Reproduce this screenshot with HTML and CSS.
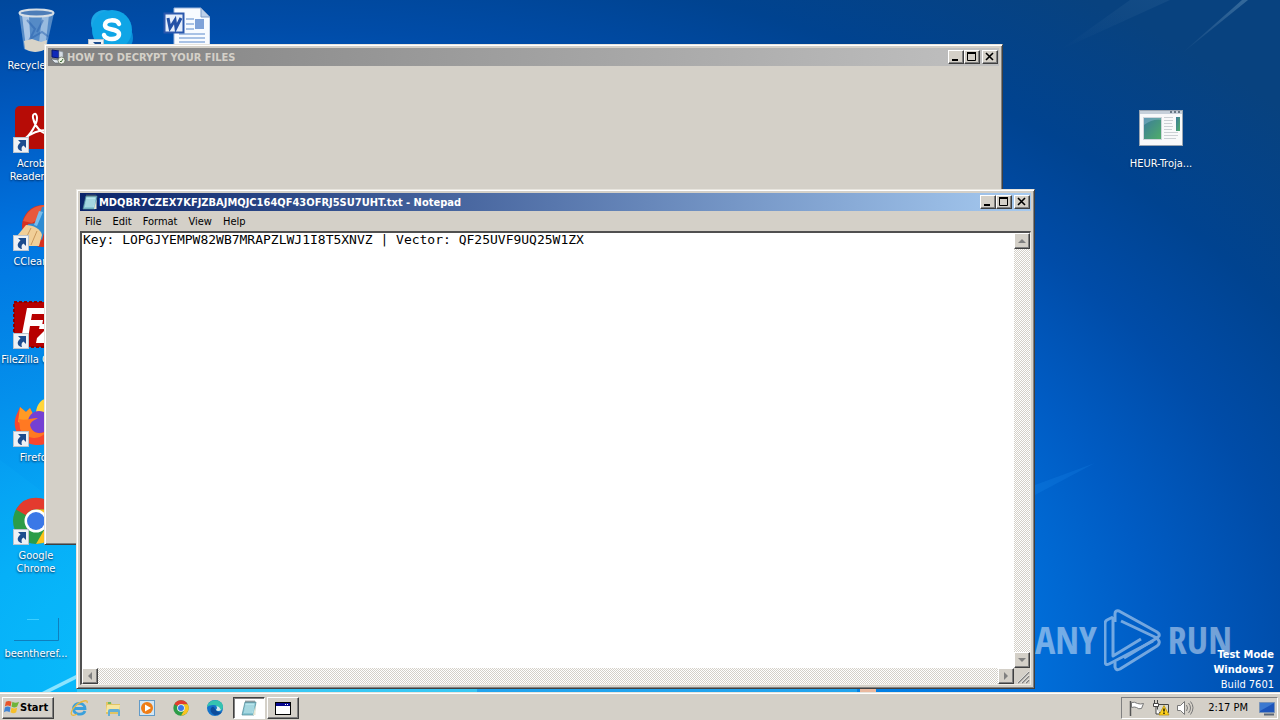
FILE: index.html
```html
<!DOCTYPE html>
<html lang="en">
<head>
    <meta charset="UTF-8">
    <meta name="viewport" content="width=device-width, initial-scale=1.0">
    <title>Desktop</title>
    <link rel="stylesheet" href="styles.css">
</head>
<body>
    <svg class="defs" width="0" height="0" aria-hidden="true">
        <defs>
            <symbol id="shortcut" viewBox="0 0 16 16">
                <rect x="0.5" y="0.5" width="15" height="15" fill="#eef1f5" stroke="#b9c3ce"/>
                <path d="M5 3h8v8l-2.500-2.500C8.500 9.500 8 11.500 9 14 5 13.500 2.500 9.500 7.500 5.500Z" fill="#1c4c8e"/>
            </symbol>
            <symbol id="notepad" viewBox="0 0 16 16">
                <path d="M4 2h11l-2 13H1Z" fill="#86c5d3" stroke="#4f8694" stroke-width="0.700"/>
                <path d="M4.500 3.500h9l-1.500 9.500H3Z" fill="#b9e5ec"/>
                <path d="M4 6h9M4 8h8.500M3.500 10h8.500M3.500 12h8" stroke="#76b7c6" stroke-width="0.600"/>
                <path d="M5 .5v2M7 .5v2M9 .5v2M11 .5v2M13 .5v2" stroke="#59666b"/>
                <path d="M14.500 5v10H12Z" fill="#e6e6d2"/>
            </symbol>
            <symbol id="chrome" viewBox="0 0 48 48">
                <circle cx="24" cy="24" r="23" fill="#2c9c48"/>
                <path d="M4 12.500A23 23 0 0 1 44 12.500H24A11.500 11.500 0 0 0 14 18.300Z" fill="#e33b2e"/>
                <path d="M44 12.500A23 23 0 0 1 24 47L34 29.700A11.500 11.500 0 0 0 34 18.300L24 12.500Z" fill="#fcc31e"/>
                <circle cx="24" cy="24" r="11.500" fill="#fff"/>
                <circle cx="24" cy="24" r="9" fill="#3b78e7"/>
            </symbol>
        </defs>
    </svg>

    <main class="desktop">
        <svg class="wallpaper" viewBox="0 0 1280 692" preserveAspectRatio="none" aria-hidden="true">
            <defs>
                <linearGradient id="ray" x1="0" y1="1" x2="1" y2="0">
                    <stop offset="0" stop-color="#fff" stop-opacity="0"/>
                    <stop offset="1" stop-color="#b8e0f0" stop-opacity="0.250"/>
                </linearGradient>
            </defs>
            <path d="M1180 55 1242 0h6Z" fill="url(#ray)"/>
            <path d="M1060 50 1130 0h40Z" fill="url(#ray)" opacity="0.250"/>
            <path d="M1035 485l60-22-60 32Z" fill="#2aa0ff" opacity="0.150"/>
            <path d="M42 692 78 674v4l-28 14Z" fill="#a5ecff" opacity="0.900"/>
            <path d="M0 460 80 520v172H0Z" fill="#18d0ff" opacity="0.080"/>
            <path d="M77 689h400v3H77Z" fill="#39c8f4"/>
            <path d="M477 689h380v3H477Z" fill="#22a4ee"/>
            <path d="M860 689h16v3h-16Z" fill="#e9b9a0"/>
        </svg>

        <div class="icon-grid">
            <a class="shortcut r1 c1" href="#">
                <svg class="shortcut-icon" viewBox="0 0 48 48">
                    <path d="M7 6 12 42q11 6 22 0L42 6Z" fill="#8eb6de" fill-opacity="0.600"/>
                    <path d="M10 8l4 33 5 2-2-33Z" fill="#e2effa" opacity="0.600"/>
                    <path d="M37 8l-4 34-7 2 4-34Z" fill="#dcecf8" opacity="0.500"/>
                    <path d="M15 13l8 9-5 10 12-7 7 5M31 13l-6 12" fill="none" stroke="#2a62ae" stroke-width="2" opacity="0.500"/>
                    <path d="M12 34l8-2 9 3 6-2-1 9q-11 6-21 0Z" fill="#d8d4c8"/>
                    <ellipse cx="24.500" cy="6" rx="17" ry="3.500" fill="#4d7db8" stroke="#d7dfe6" stroke-width="2"/>
                </svg>
                <span>Recycle Bin</span>
            </a>
            <a class="shortcut r2 c1" href="#">
                <svg class="shortcut-icon" viewBox="0 0 48 48">
                    <rect x="3" y="1" width="44" height="43" rx="5" fill="#b60c06"/>
                    <path d="M12 34c6-3 13-15 13-21 0-6-5-5-4 0 2 9 8 15 15 16 6 1 5-4-1-4-9 0-17 4-23 9Z" fill="none" stroke="#fff" stroke-width="2"/>
                    <use href="#shortcut" x="1" y="32" width="16" height="16"/>
                </svg>
                <span>Acrobat Reader DC</span>
            </a>
            <a class="shortcut r3 c1" href="#">
                <svg class="shortcut-icon" viewBox="0 0 48 48">
                    <circle cx="31" cy="23" r="21" fill="#d8301f"/>
                    <path d="M11 18Q17 3 32 2l10 4-22 14Z" fill="#e8583a"/>
                    <path d="M30 4 25 20l-9 1-2 7 16 9 9-33Z" fill="#2f8bd2"/>
                    <path d="M27 8 22 22l3 1 6-14Z" fill="#79bdea"/>
                    <path d="M14 22c7 0 15 4 16 10l-3 11H5V33Z" fill="#f1cf98"/>
                    <path d="M19 25l-6 12M25 28l-6 14" stroke="#c9985c"/>
                    <use href="#shortcut" x="1" y="32" width="16" height="16"/>
                </svg>
                <span>CCleaner</span>
            </a>
            <a class="shortcut r4 c1" href="#">
                <svg class="shortcut-icon" viewBox="0 0 48 48">
                    <rect x="2" y="1" width="45" height="45" fill="#b70000" stroke="#8c0000" stroke-width="2" stroke-dasharray="3 2"/>
                    <path d="M15 7h19l-1 6H20l-1 6h12l-1 6H18l-2 13H9Z" fill="#fff"/>
                    <path d="M28 23h16L33 36h10l-1 6H24l1-5 9-9h-7Z" fill="#fff"/>
                    <use href="#shortcut" x="1" y="32" width="16" height="16"/>
                </svg>
                <span>FileZilla Client</span>
            </a>
            <a class="shortcut r5 c1" href="#">
                <svg class="shortcut-icon" viewBox="0 0 48 48">
                    <path d="M24 13C25 5 29 1 33 0c2 8 13 12 13 25Z" fill="#ffd53b"/>
                    <path d="M8 8l6 5 4-4 3 6c4-3 14-2 19 3 8 12 3 28-14 28S-1 30 4 17Z" fill="#f7472e"/>
                    <path d="M8 8l6 5 4-4 3 6 6 2-9 5q-6 4-12 1Z" fill="#ff9a24"/>
                    <circle cx="27" cy="23" r="11" fill="#7540d3"/>
                    <path d="M7 20c6 2 13-1 19-1-3 2-7 3-8 7 2 9 11 10 17 6-7 10-21 9-27-2Z" fill="#ff7922"/>
                    <use href="#shortcut" x="1" y="32" width="16" height="16"/>
                </svg>
                <span>Firefox</span>
            </a>
            <a class="shortcut r6 c1" href="#">
                <svg class="shortcut-icon" viewBox="0 0 48 48">
                    <use href="#chrome" width="48" height="48"/>
                    <use href="#shortcut" x="1" y="32" width="16" height="16"/>
                </svg>
                <span>Google Chrome</span>
            </a>
            <a class="shortcut r7 c1" href="#">
                <svg class="shortcut-icon" viewBox="0 0 48 48">
                    <path d="M2 45.500h44.500V23" fill="none" stroke="#0f7fbe"/>
                    <path d="M15 24.500h12" stroke="#3ccfff"/>
                </svg>
                <span>beentheref...</span>
            </a>
            <a class="shortcut r1 c2" href="#" aria-label="Skype">
                <svg class="shortcut-icon" viewBox="0 0 48 48">
                    <circle cx="17" cy="16" r="13" fill="#1ba6e6"/>
                    <circle cx="32" cy="31" r="14" fill="#0a8fd8"/>
                    <circle cx="25" cy="23" r="20" fill="#0fa5e6"/>
                    <path d="M32 17c-2-5-14-5-14 1 0 6 14 3 14 9 0 7-14 6-15 1" fill="none" stroke="#fff" stroke-width="4.500" stroke-linecap="round"/>
                    <use href="#shortcut" x="1" y="32" width="16" height="16"/>
                </svg>
            </a>
            <a class="shortcut r1 c3" href="#" aria-label="Document">
                <svg class="shortcut-icon" viewBox="0 0 48 48">
                    <path d="M12 1h27l9 9v38H12Z" fill="#f8fbff" stroke="#9cb6dc"/>
                    <path d="M39 1v9h9Z" fill="#bdd0e9" stroke="#7e9ac5"/>
                    <path d="M24 12h8M24 17h8M24 22h8M17 27h26M17 31h26M17 35h26" stroke="#8fb0dd" stroke-width="1.500"/>
                    <rect x="33" y="12" width="9" height="10" fill="#7fa2d8"/>
                    <rect x="2.500" y="6.500" width="19" height="19" fill="#e6eefb" stroke="#2b58ad" stroke-width="2"/>
                    <path d="M6 11l2 10 5-8 1 8 5-10" fill="none" stroke="#2451a6" stroke-width="3"/>
                </svg>
            </a>
            <a class="shortcut r2 c16" href="#">
                <svg class="shortcut-icon" viewBox="0 0 48 48">
                    <defs>
                        <linearGradient id="pane" x1="0" y1="0" x2="1" y2="1">
                            <stop offset="0" stop-color="#3b7a9c"/>
                            <stop offset="1" stop-color="#4fae68"/>
                        </linearGradient>
                    </defs>
                    <rect x="2.500" y="5.500" width="43" height="35" fill="#f8f9fa" stroke="#9aa5b1"/>
                    <path d="M3 6h42v3H3Z" fill="#c6d0da"/>
                    <path d="M33 7h2M37 7h2M41 7h2" stroke="#4a5968" stroke-width="1.500"/>
                    <rect x="6.500" y="12.500" width="18" height="22" fill="url(#pane)" stroke="#cfd6dc"/>
                    <path d="M7 20q8-6 17-5v-2H7Z" fill="#9cc9dc" opacity="0.400"/>
                    <path d="M27 12.500h9M27 15.500h9M27 18.500h8M27 21.500h9M27 24.500h8M27 27.500h14M27 30.500h14M27 33.500h12" stroke="#cbd0d4"/>
                    <rect x="39" y="12" width="4" height="14" fill="url(#pane)"/>
                </svg>
                <span>HEUR-Troja...</span>
            </a>
        </div>

        <div class="watermark" aria-hidden="true">
            <span class="word">ANY</span>
            <svg viewBox="0 0 57 63">
                <path d="M9 8 3 11q-2 1-2 4v37q0 5 4 3L49 32M9 8v39l28-17"/>
                <path d="M11 13V5q0-4 4-3l38 21q3 2 2 4l-2 2L17 12"/>
                <path d="M11 53v5q1 4 5 2l37-23q3-2 2-5l-2-3-33 20"/>
            </svg>
            <span class="word">RUN</span>
        </div>
        <div class="build-info">
            <strong>Test Mode</strong>
            <strong>Windows 7</strong>
            <span>Build 7601</span>
        </div>

        <section class="window window-back">
            <header class="title-bar inactive">
                <svg class="title-icon" viewBox="0 0 16 16">
                    <path d="M2 1l7 1v7l-7-1Z" fill="#1029b8" stroke="#0a1870"/>
                    <path d="M9 2l4 1v8l-4-2Z" fill="#d6dde4" stroke="#8893a0" stroke-width="0.600"/>
                    <path d="M1 10l8 1 4 3H5Z" fill="#dfe6ec" stroke="#56606c" stroke-width="0.600"/>
                    <circle cx="11.500" cy="11.500" r="3.500" fill="#eef3e8" stroke="#586050" stroke-width="0.700"/>
                    <path d="M10 12l1 1 2-3" fill="none" stroke="#3d6b35"/>
                </svg>
                <h1>HOW TO DECRYPT YOUR FILES</h1>
                <div class="window-buttons">
                    <button aria-label="Minimize"><svg viewBox="0 0 12 10"><path d="M2 8h6" stroke="#000" stroke-width="2"/></svg></button>
                    <button aria-label="Maximize"><svg viewBox="0 0 12 10"><path d="M1.500 1.500h8v7h-8Z" fill="none" stroke="#000"/><path d="M1 1h9" stroke="#000" stroke-width="2"/></svg></button>
                    <button class="close" aria-label="Close"><svg viewBox="0 0 12 10"><path d="M2 1l7 7M9 1 2 8" stroke="#000" stroke-width="1.600"/></svg></button>
                </div>
            </header>
        </section>

        <section class="window window-notepad">
            <header class="title-bar">
                <svg class="title-icon"><use href="#notepad"/></svg>
                <h1>MDQBR7CZEX7KFJZBAJMQJC164QF43OFRJ5SU7UHT.txt - Notepad</h1>
                <div class="window-buttons">
                    <button aria-label="Minimize"><svg viewBox="0 0 12 10"><path d="M2 8h6" stroke="#000" stroke-width="2"/></svg></button>
                    <button aria-label="Maximize"><svg viewBox="0 0 12 10"><path d="M1.500 1.500h8v7h-8Z" fill="none" stroke="#000"/><path d="M1 1h9" stroke="#000" stroke-width="2"/></svg></button>
                    <button class="close" aria-label="Close"><svg viewBox="0 0 12 10"><path d="M2 1l7 7M9 1 2 8" stroke="#000" stroke-width="1.600"/></svg></button>
                </div>
            </header>
            <nav class="menu-bar">
                <button>File</button>
                <button>Edit</button>
                <button>Format</button>
                <button>View</button>
                <button>Help</button>
            </nav>
            <div class="editor">
                <textarea aria-label="Text" wrap="off" spellcheck="false">Key: LOPGJYEMPW82WB7MRAPZLWJ1I8T5XNVZ | Vector: QF25UVF9UQ25W1ZX</textarea>
                <div class="scrollbar vertical">
                    <button aria-label="Scroll up"><svg viewBox="0 0 12 12"><path d="M2 8h8L6 4Z"/></svg></button>
                    <button aria-label="Scroll down"><svg viewBox="0 0 12 12"><path d="M2 4h8L6 8Z"/></svg></button>
                </div>
                <div class="scrollbar">
                    <button aria-label="Scroll left"><svg viewBox="0 0 12 12"><path d="M8 2v8L4 6Z"/></svg></button>
                    <button aria-label="Scroll right"><svg viewBox="0 0 12 12"><path d="M4 2v8l4-4Z"/></svg></button>
                </div>
                <svg class="grip" viewBox="0 0 16 16">
                    <path d="M4 15 15 4M8 15l7-7M12 15l3-3" stroke="#808080" stroke-width="1.500"/>
                    <path d="M3 15 15 3M7 15l8-8M11 15l4-4" stroke="#fff" stroke-width="0.600"/>
                </svg>
            </div>
        </section>
    </main>

    <footer class="taskbar">
        <button class="start">
            <svg viewBox="0 0 18 18">
                <path d="M3 3q3-2 6 0L8 8Q5 6 2 8Z" fill="#e8542a"/>
                <path d="M10 3q3 2 7 0l-2 5q-3 2-6 0Z" fill="#6fb43a"/>
                <path d="M2 9q3-2 6 0l-1 5q-3-2-6 0Z" fill="#3f83d4"/>
                <path d="M9 9q3 2 6 0l-1 5q-3 2-6 0Z" fill="#f6bf2a"/>
            </svg>
            Start
        </button>
        <nav class="tasks">
            <button class="task" aria-label="Internet Explorer">
                <svg viewBox="0 0 18 18">
                    <path d="M15 12c-2 5-11.500 4-11.500-2.500S14.500 2.500 15 9.500H5" fill="none" stroke="#3aa0dc" stroke-width="2.800"/>
                    <path d="M2 16c-3-3 4-12 12-14q4-1 3 2M2 16q2 1 5-1" fill="none" stroke="#e9b83c" stroke-width="1.300"/>
                </svg>
            </button>
            <button class="task" aria-label="Explorer">
                <svg viewBox="0 0 18 18">
                    <path d="M2 3h5l1 2h8v10H2Z" fill="#e2c463"/>
                    <path d="M3 6h13l-1 7H2Z" fill="#f7e6a0"/>
                    <path d="M4 3h3v2H4Z" fill="#75b95e"/>
                    <path d="M4 17v-5q0-2 2-2h8q2 0 2 2v5h-2v-4H6v4Z" fill="#64afd5"/>
                </svg>
            </button>
            <button class="task" aria-label="Media Player">
                <svg viewBox="0 0 18 18">
                    <rect x="1.500" y="1.500" width="15" height="15" fill="#d3e6f4" stroke="#629bc8"/>
                    <circle cx="9" cy="9" r="6" fill="#ef7d16"/>
                    <path d="M7 5.500v7l6-3.500Z" fill="#fff"/>
                </svg>
            </button>
            <button class="task" aria-label="Chrome">
                <svg viewBox="0 0 18 18"><use href="#chrome" x="1" y="1" width="16" height="16"/></svg>
            </button>
            <button class="task" aria-label="Edge">
                <svg viewBox="0 0 18 18">
                    <circle cx="9" cy="9" r="8" fill="#1573ca"/>
                    <path d="M1 9C1-1 17-1 17 8c0 4-5 5-7 3 2-2 1-5-2-5-4 0-7 1-7 3Z" fill="#35c3b0"/>
                    <path d="M10 11c-2-1-1-4-4-3-3 2-1 7 3 8 4 0 6-2 7-3-2 1-5 0-6-2Z" fill="#0d4c9b"/>
                    <path d="M10 11q2-2 .5-4L13 8l2 3q-3 2-5 0Z" fill="#d9e6ee"/>
                </svg>
            </button>
            <button class="task active" aria-label="Notepad">
                <svg viewBox="0 0 18 18"><use href="#notepad" x="1" y="1" width="16" height="16"/></svg>
            </button>
            <button class="task open" aria-label="Window">
                <svg viewBox="0 0 18 18">
                    <rect x="1.500" y="3.500" width="15" height="12" fill="#fff" stroke="#000"/>
                    <path d="M2 5.500h14" stroke="#080890" stroke-width="3"/>
                    <path d="M11 5.500h1M13 5.500h1" stroke="#fff"/>
                </svg>
            </button>
        </nav>
        <div class="tray">
            <svg viewBox="0 0 18 18">
                <path d="M2.500 2v15" stroke="#555" stroke-width="1.500"/>
                <path d="M3.500 3.500q3-1 6 1 3 1 6 0l-2 5q-3 1-5-1-2-1-5 0Z" fill="#fff" stroke="#777"/>
            </svg>
            <svg viewBox="0 0 18 18">
                <path d="M5.500 5.500h11v8h-11Z" fill="#d7d7cf" stroke="#444"/>
                <path d="M2.500 1v3M5.500 1v3M1.500 4.500h5v3h-5ZM4 8v7h4" fill="#fff" stroke="#444"/>
                <path d="M12 6.500 17 16H7Z" fill="#ffd21c" stroke="#b28a00" stroke-width="0.700"/>
                <path d="M12 9.500v3M12 13.500v1.500" stroke="#000" stroke-width="1.300"/>
            </svg>
            <svg viewBox="0 0 18 18">
                <path d="M1.500 6.500h3l4-4v13l-4-4h-3Z" fill="#fff" stroke="#777"/>
                <path d="M10.500 6q2 3 0 6M12.500 4q4 5 0 10M14.500 2.500q5 6 0 13" fill="none" stroke="#777"/>
            </svg>
            <time>2:17 PM</time>
            <svg viewBox="0 0 18 18">
                <path d="M1.500 3.500h15v10h-15Z" fill="#1d55ba" stroke="#7893b8"/>
                <path d="M2 4h14L2 12Z" fill="#3c79d0"/>
                <path d="M6 15.500h10" stroke="#5a6777" stroke-width="2"/>
            </svg>
        </div>
    </footer>
</body>
</html>
```
FILE: styles.css
```css
* {
    box-sizing: border-box;
}
body {
    margin: 0;
    height: 100vh;
    display: flex;
    flex-direction: column;
    overflow: hidden;
    font-family: Tahoma, "DejaVu Sans Condensed", "DejaVu Sans", sans-serif;
    font-size: 11px;
    line-height: 13px;
    color: #000;
}
button {
    font: inherit;
    color: inherit;
    margin: 0;
    padding: 0;
    border: 0;
    background: none;
}
svg {
    display: block;
}
.defs {
    position: absolute;
}

/* desktop */
.desktop {
    position: relative;
    flex: 1;
    min-height: 0;
    overflow: hidden;
    background: radial-gradient(ellipse 110% 124% at 18% 98%, #0cc4fc 0%, #05aef8 20%, #0490ec 36%, #0074e0 54%, #005cc4 66%, #004ca8 76%, #004390 86%, #08427f 100%);
}
.wallpaper {
    position: absolute;
    width: 100%;
    height: 100%;
}
.icon-grid {
    position: relative;
    display: grid;
    grid-template-columns: repeat(auto-fill, 72px);
    grid-auto-rows: 98px;
    column-gap: 3px;
    padding-top: 7px;
}
.shortcut {
    display: flex;
    flex-direction: column;
    align-items: center;
    gap: 4px;
    color: #fff;
    text-align: center;
    text-decoration: none;
    text-shadow: 0 1px 2px #00234f;
}
.shortcut-icon {
    width: 48px;
    height: 48px;
}
.r1 { grid-row: 1; }
.r2 { grid-row: 2; }
.r3 { grid-row: 3; }
.r4 { grid-row: 4; }
.r5 { grid-row: 5; }
.r6 { grid-row: 6; }
.r7 { grid-row: 7; }
.c1 { grid-column: 1; }
.c2 { grid-column: 2; }
.c3 { grid-column: 3; }
.c16 { grid-column: 16; }

.watermark {
    position: absolute;
    right: 48px;
    bottom: 20px;
    display: flex;
    align-items: center;
    gap: 7px;
    color: #fff;
    opacity: 0.45;
}
.watermark .word {
    font-family: "Noto Sans ExtraCondensed", "Open Sans Condensed", "Roboto Condensed", Lato, sans-serif;
    font-size: 38px;
    font-weight: 300;
    line-height: 38px;
    margin-bottom: 4px;
}
.watermark svg {
    width: 57px;
    height: 63px;
    fill: none;
    stroke: #fff;
    stroke-width: 3;
    stroke-linejoin: round;
}
.build-info {
    position: absolute;
    right: 6px;
    bottom: 0;
    display: flex;
    flex-direction: column;
    line-height: 15px;
    text-align: right;
    color: #fff;
}

/* windows */
.window {
    position: absolute;
    display: flex;
    flex-direction: column;
    padding: 3px;
    background: #d4d0c8;
    border: 1px solid;
    border-color: #e8e5de #404040 #404040 #e8e5de;
    box-shadow: inset 1px 1px #fff, inset -1px -1px #808080;
}
.window-back {
    inset: 44px 277px 147px 44px;
}
.window-notepad {
    inset: 189px 245px 3px 76px;
}
.title-bar {
    display: flex;
    align-items: center;
    height: 18px;
    padding: 0 1px 0 2px;
    color: #fff;
    background: linear-gradient(90deg, #0a246a, #a6caf0);
}
.title-bar.inactive {
    color: #d4d0c8;
    background: linear-gradient(90deg, #808080, #c0c0c0);
}
.title-icon {
    width: 16px;
    height: 16px;
    margin-right: 1px;
}
.title-bar h1 {
    flex: 1;
    margin: 0;
    font-size: 11px;
    font-weight: bold;
    white-space: nowrap;
}
.window-buttons {
    display: flex;
}
.window-buttons button,
.scrollbar button {
    width: 16px;
    height: 14px;
    background: #d4d0c8;
    border: 1px solid;
    border-color: #fff #404040 #404040 #fff;
    box-shadow: inset -1px -1px #808080;
}
.window-buttons svg {
    width: 12px;
    height: 10px;
    margin-left: 1px;
}
.window-buttons .close {
    margin-left: 2px;
}
.menu-bar {
    display: flex;
    gap: 1px;
    height: 20px;
}
.menu-bar button {
    padding: 0 5px;
}
.editor {
    flex: 1;
    min-height: 0;
    display: grid;
    grid-template-columns: 1fr 16px;
    grid-template-rows: 1fr 16px;
    border: solid;
    border-width: 2px 1px 1px 2px;
    border-color: #505050 #f0eee8 #f0eee8 #505050;
}
.editor textarea {
    width: 100%;
    height: 100%;
    margin: 0;
    padding: 0 1px;
    border: 0;
    outline: 0;
    resize: none;
    overflow: hidden;
    background: #fff;
    color: #000;
    font-family: "DejaVu Sans Mono", monospace;
    font-size: 13px;
    line-height: 14px;
}
.scrollbar {
    display: flex;
    justify-content: space-between;
    background: repeating-conic-gradient(#fff 0 25%, #d4d0c8 0 50%) 0 0 / 2px 2px;
}
.scrollbar.vertical {
    flex-direction: column;
}
.scrollbar button {
    height: 16px;
}
.scrollbar svg {
    width: 12px;
    height: 12px;
    margin-left: 1px;
    fill: #808080;
}
.grip {
    background: #d4d0c8;
}

/* taskbar */
.taskbar {
    display: flex;
    align-items: center;
    height: 28px;
    padding: 2px 2px 0;
    background: #d4d0c8;
    border-top: 1px solid #e8e5de;
    box-shadow: inset 0 1px #fff;
}
.start {
    display: flex;
    align-items: center;
    height: 22px;
    width: 52px;
    font-weight: bold;
    background: #d4d0c8;
    border: 1px solid;
    border-color: #fff #404040 #404040 #fff;
    box-shadow: inset -1px -1px #808080;
}
.start svg {
    flex: none;
    width: 17px;
    height: 17px;
}
.tasks {
    display: flex;
    flex: 1;
    gap: 2px;
    margin-left: 9px;
}
.task {
    display: flex;
    align-items: center;
    justify-content: center;
    width: 32px;
    height: 22px;
}
.task svg,
.tray svg {
    width: 18px;
    height: 18px;
}
.task.active {
    background: #fff;
    border: 1px solid;
    border-color: #404040 #fff #fff #404040;
    box-shadow: inset 1px 1px #808080;
}
.task.open {
    border: 1px solid;
    border-color: #fff #404040 #404040 #fff;
    box-shadow: inset -1px -1px #808080;
}
.tray {
    display: flex;
    align-items: center;
    gap: 6px;
    height: 22px;
    padding: 0 1px 0 6px;
    border: 1px solid;
    border-color: #808080 #fff #fff #808080;
}
.tray time {
    margin: 0 4px 0 8px;
}
```
